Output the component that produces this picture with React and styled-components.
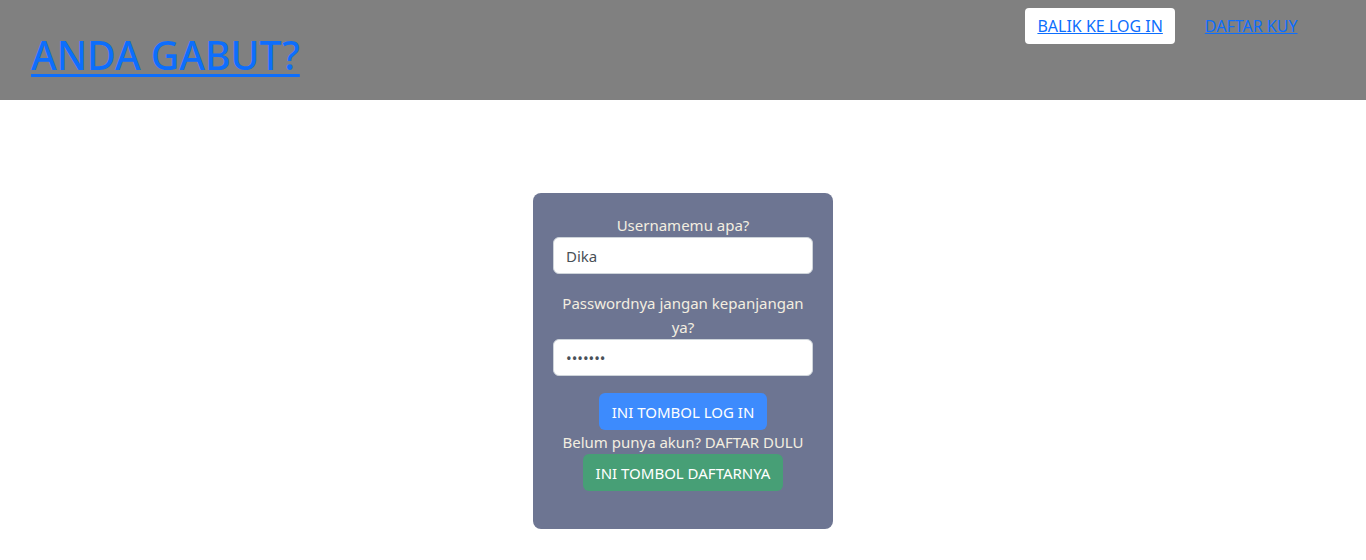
import React from 'react';
import styled, { createGlobalStyle } from 'styled-components';

const GlobalStyle = createGlobalStyle`
  body {
    margin: 0;
    font-family: "Noto Sans", "Open Sans", Arial, sans-serif;
    background: #fff;
  }
`;

const App = () => {
  return (
    <>
      <GlobalStyle />
      <Header>
        <Title href="#">ANDA GABUT?</Title>
        <Nav>
          <NavLink href="#" $active>BALIK KE LOG IN</NavLink>
          <NavLink href="#">DAFTAR KUY</NavLink>
        </Nav>
      </Header>

      <Main>
        <Card>
          <Label>Usernamemu apa?</Label>
          <Input type="text" defaultValue="Dika" />
          <Label $spaced>Passwordnya jangan kepanjangan ya?</Label>
          <Input type="password" defaultValue="1234567" />
          <Button $color="#3d8bfd">INI TOMBOL LOG IN</Button>
          <Label>Belum punya akun? DAFTAR DULU</Label>
          <Button $color="#479f76" $flush>INI TOMBOL DAFTARNYA</Button>
        </Card>
      </Main>
    </>
  );
};

export default App;

const Header = styled.header`
  height: 100px;
  background-color: #808080;
  display: flex;
  justify-content: space-between;
  align-items: flex-start;
  padding: 0 56px 0 31px;
  box-sizing: border-box;
`;

const Title = styled.a`
  margin-top: 30px;
  font-size: 39.2px;
  line-height: 50px;
  font-weight: 500;
  color: #0d6efd;
  text-decoration: underline;
  text-underline-offset: 4px;
  text-decoration-thickness: 3px;
`;

const Nav = styled.nav`
  display: flex;
  align-items: center;
  gap: 17px;
  margin-top: 8px;
`;

const NavLink = styled.a`
  display: block;
  height: 36px;
  line-height: 37px;
  padding: 0 12.5px;
  border-radius: 4px;
  font-size: 16px;
  color: #0d6efd;
  text-decoration: underline;
  background-color: ${({ $active }) => ($active ? '#fff' : 'transparent')};
`;

const Main = styled.main`
  display: flex;
  justify-content: center;
  padding-top: 93px;
`;

const Card = styled.div`
  width: 300px;
  box-sizing: border-box;
  padding: 20px 20px 38px;
  border-radius: 8px;
  background-color: #6d7592;
  display: flex;
  flex-direction: column;
  align-items: center;
`;

const Label = styled.div`
  color: #f3eee0;
  font-size: 15px;
  line-height: 24px;
  text-align: center;
  margin-top: ${({ $spaced }) => ($spaced ? '17px' : '0')};
`;

const Input = styled.input`
  width: 260px;
  height: 37px;
  box-sizing: border-box;
  border: 1px solid #ced4da;
  border-radius: 6px;
  padding: 0 12px;
  font-family: inherit;
  font-size: 15px;
  color: #495057;
  background: #fff;
  outline: none;
`;

const Button = styled.button`
  height: 37px;
  margin-top: ${({ $flush }) => ($flush ? '0' : '17px')};
  padding: 0 13px;
  border: none;
  border-radius: 6px;
  background-color: ${({ $color }) => $color};
  color: #fff;
  font-family: inherit;
  font-size: 15px;
  cursor: pointer;
`;
